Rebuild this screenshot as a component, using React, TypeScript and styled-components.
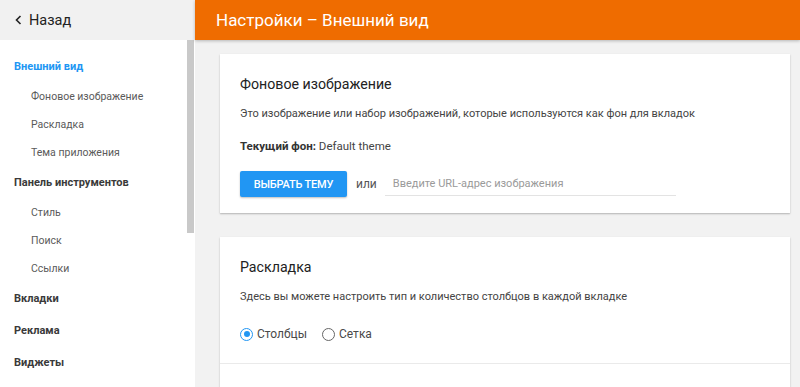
import React, { useState } from "react";
import styled, { createGlobalStyle } from "styled-components";

const GlobalStyle = createGlobalStyle`
  html, body {
    margin: 0;
    padding: 0;
    height: 100%;
    overflow: hidden;
  }
  body {
    font-family: Roboto, "Liberation Sans", Arial, sans-serif;
    background: #f2f2f2;
  }
`;

const Page = styled.div`
  display: flex;
  width: 800px;
  height: 387px;
  overflow: hidden;
`;

const Sidebar = styled.aside`
  position: relative;
  width: 195px;
  flex-shrink: 0;
  display: flex;
  flex-direction: column;
  background: #fff;
`;

const BackBar = styled.div`
  height: 40px;
  flex-shrink: 0;
  display: flex;
  align-items: center;
  gap: 6px;
  padding-left: 14px;
  background: #f1f1f1;
  color: #222;
  font-size: 14.5px;
  cursor: pointer;

  svg {
    width: 9px;
    height: 10px;
  }
`;

const NavList = styled.nav`
  flex: 1;
  padding-top: 10px;
  padding-right: 8px;
  overflow: hidden;
`;

const NavGroup = styled.div<{ $active?: boolean }>`
  height: 32px;
  display: flex;
  align-items: center;
  padding-left: 14px;
  font-size: 11px;
  font-weight: 700;
  color: ${(p) => (p.$active ? "#2196f3" : "#3a3a3a")};
`;

const NavItem = styled.div`
  height: 28px;
  display: flex;
  align-items: center;
  padding-left: 31px;
  font-size: 10.5px;
  color: #5a5a5a;
`;

const ScrollThumb = styled.div`
  position: absolute;
  top: 40px;
  right: 1px;
  width: 7px;
  height: 193px;
  background: #c9c9c9;
`;

const Main = styled.main`
  flex: 1;
  display: flex;
  flex-direction: column;
  min-width: 0;
  background: #f2f2f2;
`;

const TopBar = styled.header`
  height: 40px;
  flex-shrink: 0;
  display: flex;
  align-items: center;
  padding-left: 21px;
  background: #ef6c00;
  color: #fff;
  font-size: 17px;
  box-shadow: 0 1px 3px rgba(0, 0, 0, 0.25);
  position: relative;
  z-index: 1;
`;

const Content = styled.div`
  flex: 1;
  display: flex;
  flex-direction: column;
  gap: 24px;
  padding: 14px 10px 0 25px;
  overflow: hidden;
`;

const Card = styled.section`
  background: #fff;
  box-shadow: 0 1px 2px rgba(0, 0, 0, 0.18), 0 1px 1px rgba(0, 0, 0, 0.08);
  flex-shrink: 0;
`;

const CardSection = styled.div<{ $bottom?: number; $divided?: boolean }>`
  padding: 20px 20px ${(p) => p.$bottom ?? 16}px;
  border-bottom: ${(p) => (p.$divided ? "1px solid #eaeaea" : "none")};
`;

const CardTitle = styled.h2`
  margin: 0;
  font-size: 14.2px;
  line-height: 20px;
  font-weight: 400;
  color: #222;
`;

const CardText = styled.p<{ $top?: number; $size?: number }>`
  margin: ${(p) => p.$top ?? 12}px 0 0;
  font-size: ${(p) => p.$size ?? 11}px;
  line-height: 16px;
  color: #444;

  b {
    color: #333;
  }
`;

const ActionRow = styled.div`
  display: flex;
  align-items: center;
  margin-top: 17px;
`;

const PrimaryButton = styled.button`
  height: 26px;
  width: 107px;
  padding: 0;
  border: none;
  border-radius: 2px;
  background: #2196f3;
  color: #fff;
  font-family: inherit;
  font-size: 11px;
  font-weight: 500;
  letter-spacing: -0.2px;
  box-shadow: 0 1px 2px rgba(0, 0, 0, 0.25);
  cursor: pointer;
`;

const OrText = styled.span`
  margin: 0 8px 0 9px;
  font-size: 12px;
  color: #555;
`;

const UrlInput = styled.input`
  width: 291px;
  height: 24px;
  box-sizing: border-box;
  padding: 0 8px;
  border: none;
  border-bottom: 1px solid #e3e3e3;
  outline: none;
  font-family: inherit;
  font-size: 11px;
  color: #333;

  &::placeholder {
    color: #9a9a9a;
  }
`;

const RadioRow = styled.div`
  display: flex;
  align-items: center;
  gap: 15px;
  margin-top: 21px;
  height: 16px;
`;

const RadioLabel = styled.label`
  display: flex;
  align-items: center;
  gap: 4px;
  font-size: 12px;
  color: #4a4a4a;
  cursor: pointer;
`;

const RadioDot = styled.span<{ $checked: boolean }>`
  width: 13px;
  height: 13px;
  box-sizing: border-box;
  border-radius: 50%;
  border: 1.5px solid ${(p) => (p.$checked ? "#2196f3" : "#666")};
  display: flex;
  align-items: center;
  justify-content: center;

  &::after {
    content: "";
    width: 6px;
    height: 6px;
    border-radius: 50%;
    background: ${(p) => (p.$checked ? "#2196f3" : "transparent")};
  }
`;

const nav = [
  { title: "Внешний вид", active: true, items: ["Фоновое изображение", "Раскладка", "Тема приложения"] },
  { title: "Панель инструментов", items: ["Стиль", "Поиск", "Ссылки"] },
  { title: "Вкладки", items: [] },
  { title: "Реклама", items: [] },
  { title: "Виджеты", items: [] },
];

const App: React.FC = () => {
  const [layout, setLayout] = useState("columns");

  return (
    <Page>
      <GlobalStyle />
      <Sidebar>
        <BackBar>
          <svg viewBox="0 0 9 10">
            <path d="M6.5 1 L2.5 5 L6.5 9" fill="none" stroke="#222" strokeWidth="1.6" />
          </svg>
          Назад
        </BackBar>
        <NavList>
          {nav.map((g) => (
            <div key={g.title}>
              <NavGroup $active={g.active}>{g.title}</NavGroup>
              {g.items.map((i) => (
                <NavItem key={i}>{i}</NavItem>
              ))}
            </div>
          ))}
        </NavList>
        <ScrollThumb />
      </Sidebar>

      <Main>
        <TopBar>Настройки – Внешний вид</TopBar>
        <Content>
          <Card>
            <CardSection>
              <CardTitle>Фоновое изображение</CardTitle>
              <CardText>
                Это изображение или набор изображений, которые используются как фон для вкладок
              </CardText>
              <CardText $top={16} $size={11.5}>
                <b>Текущий фон:</b> Default theme
              </CardText>
              <ActionRow>
                <PrimaryButton>ВЫБРАТЬ ТЕМУ</PrimaryButton>
                <OrText>или</OrText>
                <UrlInput placeholder="Введите URL-адрес изображения" />
              </ActionRow>
            </CardSection>
          </Card>

          <Card>
            <CardSection $bottom={21} $divided>
              <CardTitle>Раскладка</CardTitle>
              <CardText>Здесь вы можете настроить тип и количество столбцов в каждой вкладке</CardText>
              <RadioRow>
                <RadioLabel onClick={() => setLayout("columns")}>
                  <RadioDot $checked={layout === "columns"} />
                  Столбцы
                </RadioLabel>
                <RadioLabel onClick={() => setLayout("grid")}>
                  <RadioDot $checked={layout === "grid"} />
                  Сетка
                </RadioLabel>
              </RadioRow>
            </CardSection>
            <CardSection $bottom={60} />
          </Card>
        </Content>
      </Main>
    </Page>
  );
};

export default App;
